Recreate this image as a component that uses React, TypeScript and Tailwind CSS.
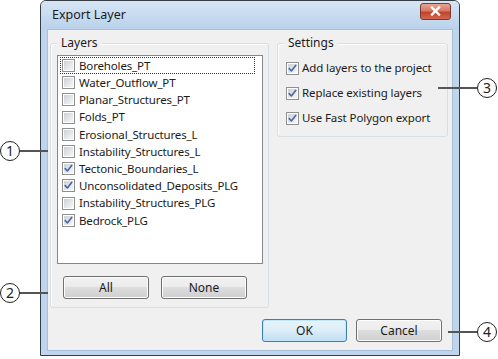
import type { ReactNode } from "react";

const LAYERS: { name: string; checked: boolean }[] = [
  { name: "Boreholes_PT", checked: false },
  { name: "Water_Outflow_PT", checked: false },
  { name: "Planar_Structures_PT", checked: false },
  { name: "Folds_PT", checked: false },
  { name: "Erosional_Structures_L", checked: false },
  { name: "Instability_Structures_L", checked: false },
  { name: "Tectonic_Boundaries_L", checked: true },
  { name: "Unconsolidated_Deposits_PLG", checked: true },
  { name: "Instability_Structures_PLG", checked: false },
  { name: "Bedrock_PLG", checked: true },
];

const SETTINGS = ["Add layers to the project", "Replace existing layers", "Use Fast Polygon export"];

function CheckBox({ checked }: { checked: boolean }) {
  return (
    <span className="flex h-[13px] w-[13px] shrink-0 items-center justify-center border border-[#8e8f8f] bg-white p-px">
      <span className="relative flex h-full w-full items-center justify-center bg-gradient-to-br from-[#cdd1d6] to-[#f7f7f7]">
        {checked && (
          <svg width="9" height="9" viewBox="0 0 9 9" className="absolute">
            <path d="M1.2 4.6 L3.4 7 L7.8 1.3" fill="none" stroke="#4a67a3" strokeWidth="1.6" strokeLinecap="round" strokeLinejoin="round" />
          </svg>
        )}
      </span>
    </span>
  );
}

function Button({ children, primary, className }: { children: ReactNode; primary?: boolean; className?: string }) {
  return (
    <div
      className={`flex h-[23px] items-center justify-center rounded-[3px] border text-[12px] text-[#1b1b1b] ${
        primary
          ? "border-[#3c7fb1] bg-gradient-to-b from-[#e9f4fb] via-[#dcedf8] to-[#bfdff3] shadow-[inset_0_0_0_1px_#bfe6fb]"
          : "border-[#707070] bg-[linear-gradient(#f2f2f2_0%,#ebebeb_50%,#dddddd_50%,#cfcfcf_100%)] shadow-[inset_0_0_0_1px_#fcfcfc]"
      } ${className ?? ""}`}
    >
      {children}
    </div>
  );
}

function GroupBox({ label, className, children }: { label: string; className?: string; children: ReactNode }) {
  return (
    <div className={`relative rounded-[3px] border border-[#d5dfe5] shadow-[inset_1px_1px_0_#fff] ${className ?? ""}`}>
      <span className="absolute left-[6px] top-[-9px] bg-[#f0f0f0] px-[4px] text-[12px] leading-[16px]">{label}</span>
      {children}
    </div>
  );
}

function Callout({ n, className }: { n: number; className: string }) {
  return (
    <div className={`absolute flex h-[20px] w-[20px] items-center justify-center rounded-full border-[1.3px] border-[#222] bg-white text-[14px] leading-none text-[#222] ${className}`}>
      {n}
    </div>
  );
}

export default function App() {
  return (
    <div className="relative h-[359px] w-[498px] overflow-hidden bg-white font-['Noto_Sans',sans-serif] text-[#1b1b1b]">
      {/* dialog window */}
      <div className="ml-[40px] flex h-[356px] w-[420px] flex-col rounded-t-[6px] border border-[#363d45] bg-[#bfd5ed]">
        <div className="flex h-[28px] items-center rounded-t-[5px] bg-gradient-to-b from-[#d6e5f5] to-[#bad2eb] pl-[11px] pr-[8px]">
          <span className="text-[12.5px] leading-none">Export Layer</span>
          <div className="ml-auto mt-[-8px] flex h-[17px] w-[31px] items-center justify-center rounded-[3px] border border-[#7a3a30] bg-[linear-gradient(#e8a493_0%,#d77a66_45%,#c3432b_55%,#d2674e_100%)]">
            <svg width="11" height="10" viewBox="0 0 11 10">
              <path d="M2 1.5 L9 8.5 M9 1.5 L2 8.5" stroke="#fff" strokeWidth="2.4" strokeLinecap="square" />
            </svg>
          </div>
        </div>

        <div className="mx-[6px] mb-[4px] flex flex-1 flex-col border border-[#a9bfd8] bg-[#f0f0f0] pt-[13px]">
          <div className="flex items-start gap-[8px] pl-[2px]">
            <GroupBox label="Layers" className="h-[265px] w-[219px] px-[6px] pt-[11px]">
              <div className="h-[209px] w-[206px] border border-[#828790] bg-white px-[2px] pt-[1px]">
                {LAYERS.map((l, i) => (
                  <div
                    key={l.name}
                    className={`flex h-[17.2px] w-[195px] items-center gap-[4px] pl-[2px] text-[11.5px] tracking-[-0.15px] ${
                      i === 0 ? "outline outline-1 outline-dotted outline-[#333] outline-offset-[-1px]" : ""
                    }`}
                  >
                    <CheckBox checked={l.checked} />
                    <span className="leading-none">{l.name}</span>
                  </div>
                ))}
              </div>
              <div className="mt-[12px] flex gap-[12px] pl-[6px]">
                <Button className="w-[86px]">All</Button>
                <Button className="w-[86px]">None</Button>
              </div>
            </GroupBox>

            <GroupBox label="Settings" className="h-[94px] w-[171px] pl-[8px] pt-[17px]">
              <div className="flex flex-col gap-[11px]">
                {SETTINGS.map((s) => (
                  <div key={s} className="flex h-[14px] items-center gap-[3px] text-[11.5px] tracking-[-0.1px]">
                    <CheckBox checked />
                    <span className="leading-none">{s}</span>
                  </div>
                ))}
              </div>
            </GroupBox>
          </div>

          <div className="mt-[11px] flex gap-[9px] pl-[214px]">
            <Button primary className="w-[85px]">OK</Button>
            <Button className="w-[86px]">Cancel</Button>
          </div>
        </div>
      </div>

      {/* annotation lines */}
      <div className="absolute left-[19px] top-[150px] h-[1.5px] w-[29px] bg-[#555]" />
      <div className="absolute left-[19px] top-[292px] h-[1.5px] w-[29px] bg-[#555]" />
      <div className="absolute left-[438px] top-[87px] h-[1.5px] w-[40px] bg-[#555]" />
      <div className="absolute left-[448px] top-[331px] h-[1.5px] w-[30px] bg-[#555]" />
      <Callout n={1} className="left-[0px] top-[141px]" />
      <Callout n={2} className="left-[0px] top-[283px]" />
      <Callout n={3} className="left-[477px] top-[78px]" />
      <Callout n={4} className="left-[477px] top-[322px]" />
    </div>
  );
}
